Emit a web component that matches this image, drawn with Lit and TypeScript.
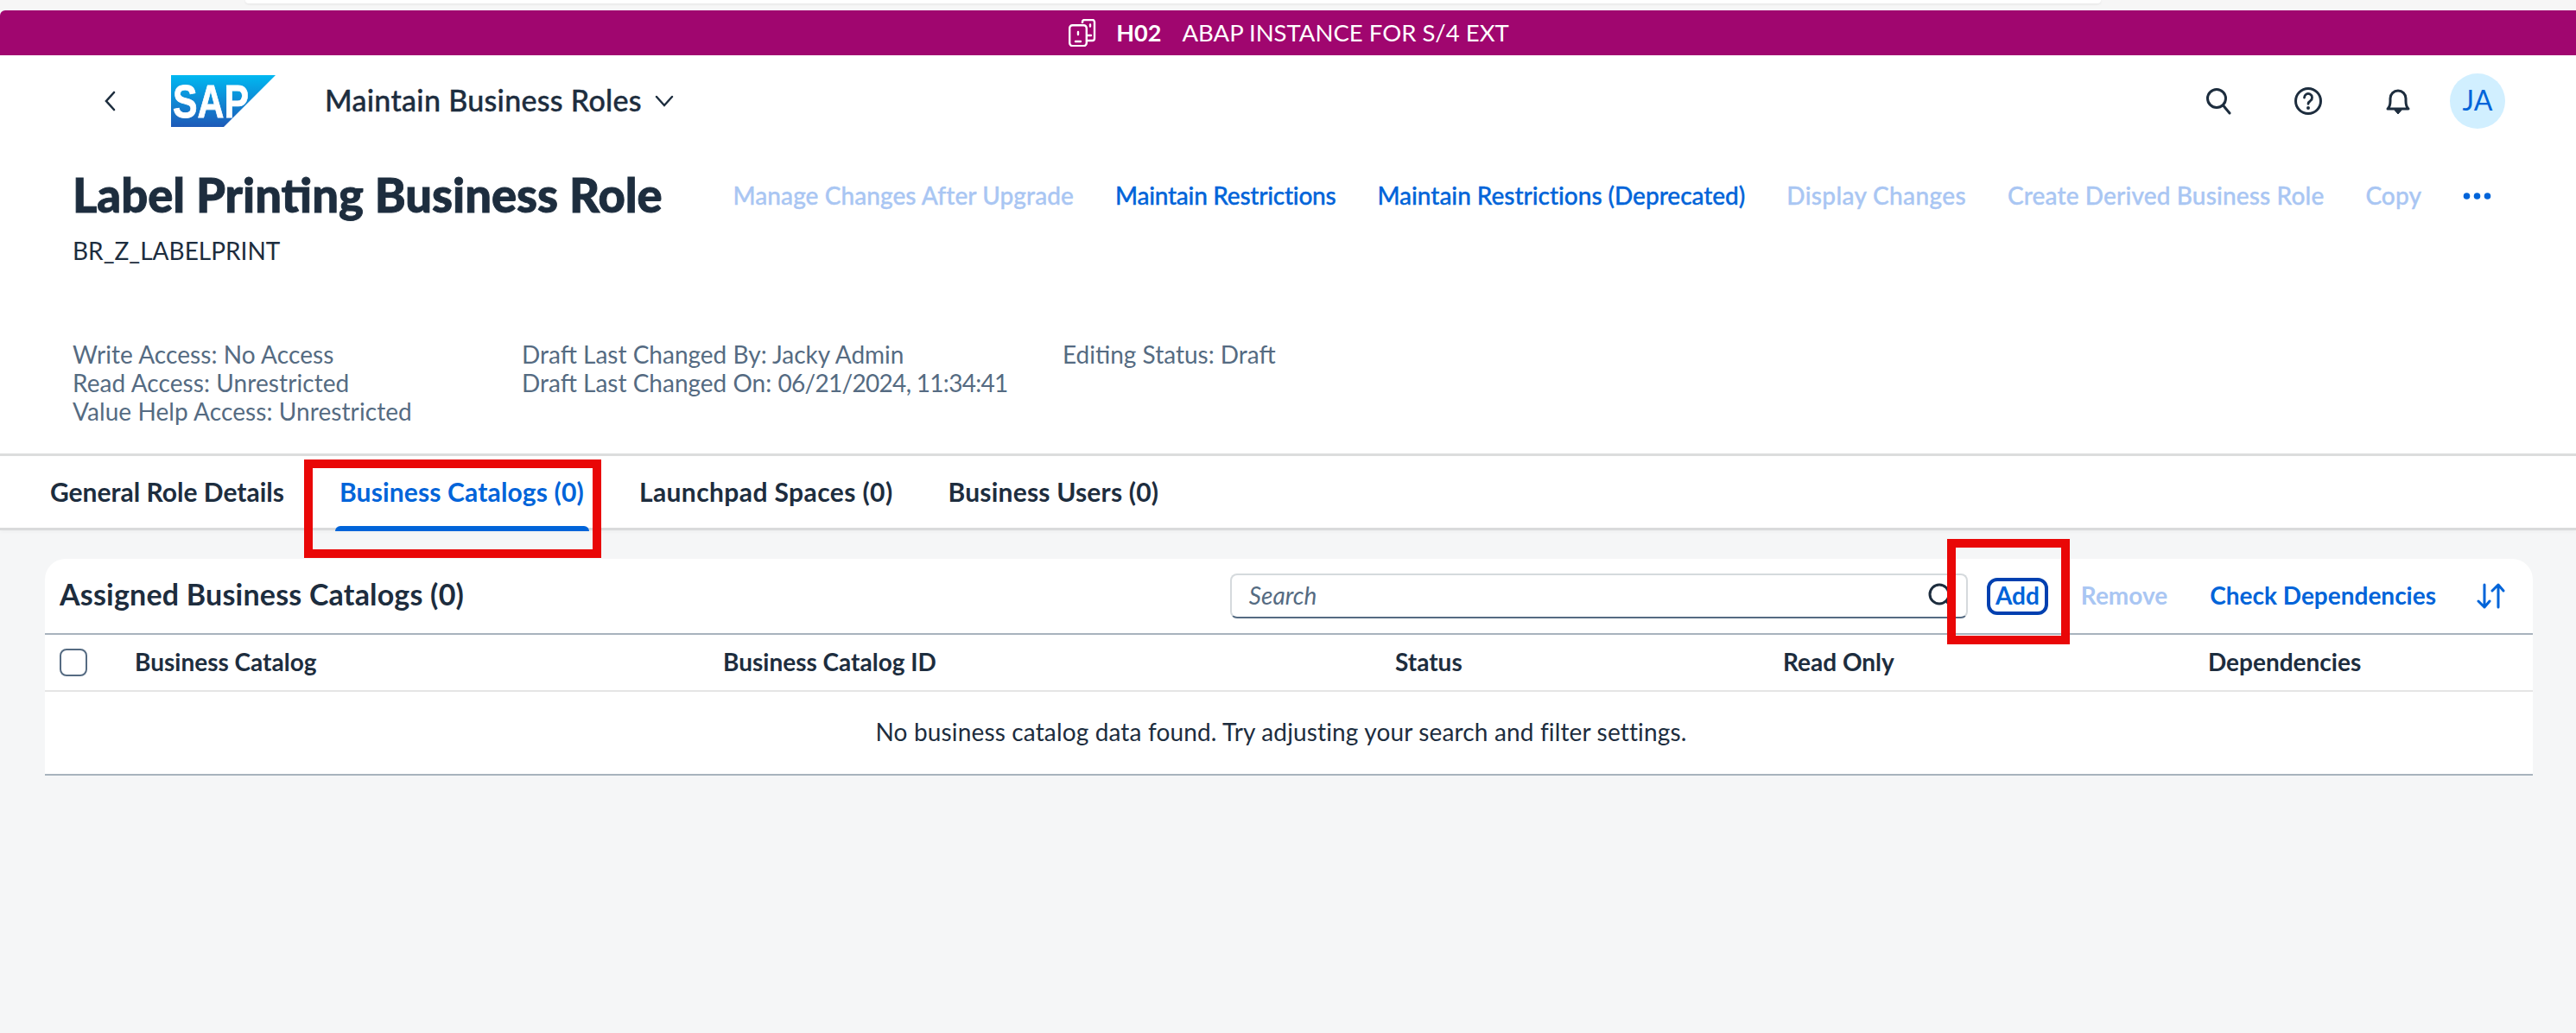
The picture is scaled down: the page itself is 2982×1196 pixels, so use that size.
import { LitElement, html, css } from "lit";
import { customElement } from "lit/decorators.js";

const actions: [string, boolean, number][] = [
  ["Manage Changes After Upgrade", false, 0.08],
  ["Maintain Restrictions", true, -0.25],
  ["Maintain Restrictions (Deprecated)", true, -0.03],
  ["Display Changes", false, 0.35],
  ["Create Derived Business Role", false, 0.15],
  ["Copy", false, 0.1],
];
const tabs: [string, number][] = [
  ["General Role Details", 0],
  ["Business Catalogs (0)", 0.15],
  ["Launchpad Spaces (0)", 0.4],
  ["Business Users (0)", 0.2],
];
const cols = ["Business Catalog", "Business Catalog ID", "Status", "Read Only", "Dependencies"];

@customElement("app-root")
export class AppRoot extends LitElement {
  static styles = css`
    :host {
      display: block;
      position: relative;
      width: 2982px;
      height: 1196px;
      overflow: hidden;
      background: #f5f6f7;
      font-family: "Lato", "Liberation Sans", sans-serif;
      font-size: 28px;
      color: #1d2d3e;
    }
    * { box-sizing: border-box; }
    .browser { height: 12px; background: #f6f6f6; padding: 0 550px 0 284px; }
    .browser div { height: 4px; background: #fff; border-radius: 0 0 10px 10px; box-shadow: 0 1px 3px rgba(0,0,0,.08); }
    .system {
      height: 52px; background: #a0066f; color: #fff;
      display: flex; align-items: center; justify-content: center;
      border-radius: 6px 0 0 0;
    }
    .system svg { width: 32px; height: 32px; margin: 0 23px 0 2px; }
    .system b { font-weight: 700; font-size: 27px; margin-right: 24px; padding-bottom: 2px; }
    .system span { font-size: 27.500px; padding-bottom: 2px; }
    .white { background: #fff; }
    .shell { height: 106px; display: flex; align-items: center; padding: 0 82px 0 120px; }
    .shell .back { width: 16px; height: 26px; margin-right: 62px; }
    .logo { width: 122px; height: 60px; margin-right: 56px; }
    .logo text { font-family: "Liberation Sans", sans-serif; font-weight: 700; font-size: 54px; fill: #fff; stroke: #fff; stroke-width: .8px; }
    .apptitle { font-size: 34px; font-weight: 500; letter-spacing: .3px; -webkit-text-stroke: .4px #1d2d3e; margin-top: -4px; }
    .caret { width: 24px; height: 14px; margin-left: 14px; }
    .spacer { flex: 1; }
    .sicon { width: 32px; height: 32px; }
    .sicon.s1 { margin-right: 72px; margin-left: -2px; }
    .sicon.s2 { margin-right: 72px; }
    .sicon.s3 { margin-right: 44px; }
    .avatar {
      width: 64px; height: 64px; border-radius: 50%; background: #d1efff; color: #0064d9;
      display: flex; align-items: center; justify-content: center; font-size: 32px; padding-bottom: 3px;
    }
    .head { height: 130px; padding: 34px 98px 0 84px; display: flex; align-items: flex-start; }
    .h1col { width: 766px; }
    h1 { margin: -14px 0 0; font-size: 54.300px; line-height: 70px; height: 70px; font-weight: 900; white-space: nowrap; -webkit-text-stroke: .9px #1d2d3e; }
    .code { line-height: 34px; margin-top: 13px; }
    .actions { display: flex; gap: 48px; align-items: center; height: 46px; font-weight: 500; color: #a9c6f3; white-space: nowrap; -webkit-text-stroke: .35px; }
    .actions span { padding-bottom: 3px; }
    .actions .on { color: #0064d9; }
    .dots { width: 33px; height: 8px; margin-left: 0; }
    .meta { height: 225px; padding: 94px 0 0 84px; display: flex; color: #556b82; line-height: 33px; }
    .meta .c1 { width: 520px; letter-spacing: .08px; }
    .meta .c2 { width: 626px; }
    .date { letter-spacing: -.7px; }
    .rule { height: 3px; background: #dcdddd; }
    .tabs {
      height: 86px; display: flex; padding-left: 58px; gap: 64px;
      border-bottom: 3px solid #d9dadb;
      font-weight: 700; font-size: 30px; line-height: 82px; box-shadow: 0 2px 4px rgba(0,0,0,.03);
    }
    .tab { position: relative; height: 86px; white-space: nowrap; }
    .tab.sel { color: #0064d9; }
    .tab.sel::after {
      content: ""; position: absolute; left: -5px; right: -6px; top: 81px; height: 6px;
      background: #0064d9; border-radius: 6px 6px 0 0;
    }
    .card { margin: 33px 50px 0 52px; background: #fff; border-radius: 24px 24px 0 0; border-bottom: 2px solid #a8b3bd; }
    .toolbar { height: 88px; display: flex; align-items: center; padding: 0 32px 0 17px; border-bottom: 2px solid #a8b3bd; }
    .ttitle { font-size: 34px; font-weight: 700; letter-spacing: .2px; flex: 1; white-space: nowrap; padding-bottom: 5px; }
    .search {
      width: 854px; height: 52px; margin-right: 22px; border: 2px solid #d5dadd; border-bottom-color: #556b82;
      border-radius: 8px; display: flex; align-items: center; justify-content: space-between;
      padding: 0 4px 3px 20px; font-style: italic; color: #556b82;
    }
    .search svg { width: 30px; height: 30px; margin: 3px 10px 0 0; }
    .add {
      width: 71px; height: 43px; border: 4px solid #0040b0; border-radius: 12px; color: #0064d9; font-weight: 700;
      display: flex; align-items: center; justify-content: center; margin-right: 38px; padding-bottom: 3px;
    }
    .remove { font-weight: 700; color: #a9c6f3; margin-right: 49px; padding-bottom: 3px; }
    .check { font-weight: 700; color: #0064d9; margin-right: 47px; white-space: nowrap; padding-bottom: 3px; }
    .sort { width: 33px; height: 30px; }
    .thead {
      height: 66px; display: grid; grid-template-columns: 104px 681px 778px 449px 492px 1fr; align-items: center;
      border-bottom: 2px solid #e5e5e5; font-weight: 700; white-space: nowrap;
    }
    .thead .col { padding-bottom: 3px; }
    .cb { width: 32px; height: 32px; border: 2px solid #556b82; border-radius: 8px; margin-left: 17px; background: #fff; }
    .empty { height: 95px; display: flex; align-items: center; justify-content: center; padding: 0 18px 3px 0; letter-spacing: .15px; }
    .mark { position: absolute; border: 10px solid #e90707; }
    .m1 { left: 352px; top: 532px; width: 344px; height: 114px; }
    .m2 { left: 2254px; top: 624px; width: 142px; height: 122px; }
  `;

  render() {
    return html`
      <div class="browser"><div></div></div>
      <div class="system">
        <svg viewBox="0 0 32 32" fill="none" stroke="#fff" stroke-width="2.4">
          <path d="M16 5V3.5A2.5 2.5 0 0 1 18.5 1h9A2.5 2.5 0 0 1 30 3.5v19a2.5 2.5 0 0 1-2.5 2.5H22"/>
          <rect x="1.2" y="7.2" width="19.6" height="24" rx="3.4"/>
          <path d="M8 26h6M11 15v3M25 6.5v2M22 19h4" stroke-linecap="round"/>
        </svg>
        <b>H02</b><span>ABAP INSTANCE FOR S/4 EXT</span>
      </div>
      <div class="white">
        <div class="shell">
          <svg class="back" viewBox="0 0 16 26" fill="none" stroke="#1d2d3e" stroke-width="2.6" stroke-linecap="round"><path d="M12 3 3 13l9 10"/></svg>
          <svg class="logo" viewBox="0 0 122 60">
            <defs><linearGradient id="g" x1="0" y1="0" x2="0" y2="1"><stop offset="0" stop-color="#00b8f1"/><stop offset="1" stop-color="#1e5ab8"/></linearGradient></defs>
            <path d="M0 0H121L61 60H0Z" fill="url(#g)"/>
            <text x="2" y="49" textLength="88" lengthAdjust="spacingAndGlyphs">SAP</text>
          </svg>
          <span class="apptitle">Maintain Business Roles</span>
          <svg class="caret" viewBox="0 0 24 14" fill="none" stroke="#1d2d3e" stroke-width="2.4" stroke-linecap="round"><path d="M3 2l9 10 9-10"/></svg>
          <div class="spacer"></div>
          <svg class="sicon s1" viewBox="0 0 32 32" fill="none" stroke="#1d2d3e" stroke-width="3" stroke-linecap="round"><circle cx="14" cy="13" r="10.5"/><path d="M21.5 21 29 30"/></svg>
          <svg class="sicon s2" viewBox="0 0 32 32" fill="none" stroke="#1d2d3e" stroke-width="3" stroke-linecap="round"><circle cx="16" cy="16" r="14.5"/><path d="M11.5 12a4.5 4.5 0 1 1 7 3.7c-1.600 1-2.500 1.900-2.500 3.600" stroke-width="2.8"/><circle cx="16" cy="24" r="1" stroke-width="2"/></svg>
          <svg class="sicon s3" viewBox="0 0 32 32" fill="none" stroke="#1d2d3e" stroke-width="3" stroke-linejoin="round"><path d="M4 25c2.500-2.500 3-5 3-9v-3a9 9 0 0 1 18 0v3c0 4 .5 6.500 3 9Z"/><path d="M12 26.500h8l-4 4.500Z" fill="#1d2d3e" stroke-width="1"/></svg>
          <div class="avatar">JA</div>
        </div>
        <div class="head">
          <div class="h1col">
            <h1>Label Printing Business Role</h1>
            <div class="code">BR_Z_LABELPRINT</div>
          </div>
          <div class="actions">
            ${actions.map(([t, on, ls]) => html`<span class=${on ? "on" : ""} style="letter-spacing:${ls}px">${t}</span>`)}
            <svg class="dots" viewBox="0 0 32 8" fill="#0064d9"><circle cx="4" cy="4" r="3.800"/><circle cx="16" cy="4" r="3.800"/><circle cx="28" cy="4" r="3.800"/></svg>
          </div>
        </div>
        <div class="meta">
          <div class="c1">Write Access: No Access<br />Read Access: Unrestricted<br />Value Help Access: Unrestricted</div>
          <div class="c2">Draft Last Changed By: Jacky Admin<br />Draft Last Changed On: <span class="date">06/21/2024, 11:34:41</span></div>
          <div>Editing Status: Draft</div>
        </div>
        <div class="rule"></div>
        <div class="tabs">
          ${tabs.map(([t, ls], i) => html`<div class="tab ${i === 1 ? "sel" : ""}" style="letter-spacing:${ls}px">${t}</div>`)}
        </div>
      </div>
      <div class="card">
        <div class="toolbar">
          <div class="ttitle">Assigned Business Catalogs (0)</div>
          <div class="search">Search
            <svg viewBox="0 0 30 30" fill="none" stroke="#1d2d3e" stroke-width="3" stroke-linecap="round"><circle cx="13" cy="13" r="11"/><path d="m21 21 7 8"/></svg>
          </div>
          <div class="add">Add</div>
          <div class="remove">Remove</div>
          <div class="check">Check Dependencies</div>
          <svg class="sort" viewBox="0 0 33 30" fill="none" stroke="#0064d9" stroke-width="3" stroke-linecap="round" stroke-linejoin="round"><path d="M9 2v26M2 21l7 7 6-7M25 28V2M18 9l7-7 6 7"/></svg>
        </div>
        <div class="thead">
          <div class="cb"></div>
          ${cols.map((c) => html`<div class="col">${c}</div>`)}
        </div>
        <div class="empty">No business catalog data found. Try adjusting your search and filter settings.</div>
      </div>
      <div class="mark m1"></div>
      <div class="mark m2"></div>
    `;
  }
}
